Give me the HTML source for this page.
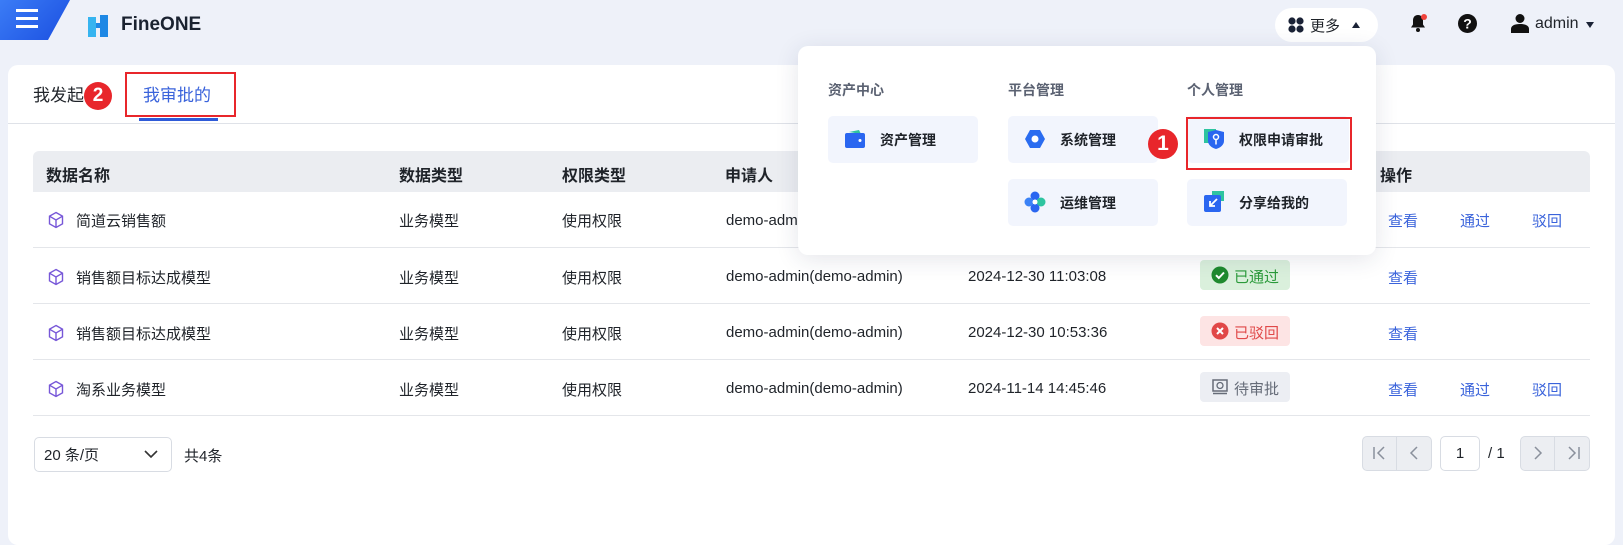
<!DOCTYPE html>
<html><head><meta charset="utf-8"><style>
*{box-sizing:border-box;margin:0;padding:0}
body{width:1623px;height:534px;overflow:hidden;background:#eef1f9;font-family:"Liberation Sans","Noto Sans CJK SC",sans-serif;color:#1f2329;position:relative;font-size:15px}
.a{position:absolute}
.panel{left:8px;top:65px;width:1607px;height:480px;background:#fff;border-radius:10px}
.th{top:151px;left:33px;width:1557px;height:41px;background:#ebedf1;border-radius:6px 6px 0 0}
.hl{font-weight:bold;font-size:16px;top:162px}
.line{height:1px;background:#e4e6ea;left:33px;width:1557px}
.c{font-size:15px}
.lk{color:#3a63db;font-size:15px}
.cube{width:18px;height:18px}
.dd{left:798px;top:46px;width:578px;height:209px;background:#fff;border-radius:10px;box-shadow:0 4px 24px rgba(30,40,80,.12)}
.card{background:#f2f5fd;border-radius:5px;height:47px;width:150px;font-weight:bold;font-size:14px}
.card span{position:absolute;left:52px;top:14px}
.ic{position:absolute;left:16px;top:12px;width:22px;height:22px}
.gh{font-size:14px;color:#5b6272;font-weight:bold;top:80px}
.badge{position:absolute;border-radius:12px;width:30px;height:30px;background:#e8262b;color:#fff;font-weight:bold;font-size:21px;text-align:center;line-height:30px}
.st{left:1200px;width:90px;height:30px;border-radius:4px;font-size:15px}
.st span{position:absolute;left:34px;top:6px}
.pg{border:1px solid #d8dce3;background:#eceef2;border-radius:5px;height:35px;top:436px}
</style></head><body>
<div class="a" style="left:0;top:0;width:72px;height:40px;background:linear-gradient(135deg,#3b7cf6,#1a4ee0);clip-path:polygon(0 0,70px 0,48px 40px,0 40px);border-bottom-right-radius:14px"></div>
<div class="a" style="left:16px;top:9px;width:22px;height:3px;background:#fff;box-shadow:0 8px 0 #fff,0 16px 0 #fff"></div>
<svg class="a" style="left:87px;top:14px" width="22" height="24" viewBox="0 0 22 24"><path d="M1 3h8v6h4v-8h8v22h-8v-9h-4v9h-8z" fill="#1e88e5"/><path d="M1 3h8v20h-8z" fill="#36b4f0"/></svg>
<div class="a" style="left:121px;top:14px;font-weight:bold;font-size:19px;color:#1a2230">FineONE</div>
<div class="a" style="left:1275px;top:8px;width:103px;height:34px;background:#fff;border-radius:17px"></div>
<svg class="a" style="left:1288px;top:17px" width="16" height="16"><circle cx="4" cy="4" r="3.6" fill="#1a2236"/><circle cx="12" cy="4" r="3.6" fill="#1a2236"/><circle cx="4" cy="12" r="3.6" fill="#1a2236"/><circle cx="12" cy="12" r="3.6" fill="#1a2236"/></svg>
<div class="a" style="left:1310px;top:15px;font-size:15px">更多</div>
<div class="a" style="left:1352px;top:22px;width:0;height:0;border-left:4px solid transparent;border-right:4px solid transparent;border-bottom:6px solid #1a2236"></div>
<svg class="a" style="left:1408px;top:13px" width="20" height="20" viewBox="0 0 20 20"><path d="M10 2c-3.5 0-5 2.5-5 5.5v4l-2 3h14l-2-3v-4C15 4.5 13.5 2 10 2z" fill="#111"/><circle cx="10" cy="17" r="2" fill="#111"/><circle cx="16" cy="4" r="3" fill="#f0433c"/></svg>
<svg class="a" style="left:1458px;top:14px" width="19" height="19"><circle cx="9.5" cy="9.5" r="9.5" fill="#111"/><text x="9.5" y="14.5" fill="#fff" font-size="14" font-weight="bold" text-anchor="middle" font-family="Liberation Sans">?</text></svg>
<svg class="a" style="left:1511px;top:13px" width="18" height="20"><circle cx="9" cy="5.5" r="4.5" fill="#111"/><path d="M0 20v-4c0-3 3-5 9-5s9 2 9 5v4z" fill="#111"/></svg>
<div class="a" style="left:1535px;top:15px;font-size:16px">admin</div>
<div class="a" style="left:1586px;top:22px;border-left:4px solid transparent;border-right:4px solid transparent;border-top:6px solid #1a2236"></div>

<div class="a panel"></div>
<div class="a" style="left:33px;top:81px;font-size:17px">我发起</div>
<div class="a" style="left:143px;top:81px;font-size:17px;color:#3a63db">我审批的</div>
<div class="a" style="left:139px;top:118px;width:79px;height:3px;background:#2e5bd8"></div>
<div class="a" style="left:8px;top:123px;width:1607px;height:1px;background:#dfe2e8"></div>
<div class="a" style="left:125px;top:72px;width:111px;height:45px;border:2px solid #e8262b"></div>
<div class="badge a" style="left:84px;top:82px;width:28px;height:28px;line-height:28px;border-radius:14px;font-size:19px">2</div>

<div class="a th"></div>
<div class="a hl" style="left:46px">数据名称</div>
<div class="a hl" style="left:399px">数据类型</div>
<div class="a hl" style="left:562px">权限类型</div>
<div class="a hl" style="left:725px">申请人</div>
<div class="a hl" style="left:1380px">操作</div>

<div class="a line" style="top:247px"></div>
<div class="a line" style="top:303px"></div>
<div class="a line" style="top:359px"></div>
<div class="a line" style="top:415px"></div>

<div class="a" style="left:0;top:210px;width:100%">
<svg class="a cube" style="left:47px;top:1px" viewBox="0 0 18 18"><path d="M9 1.5l6.5 3.7v7.6L9 16.5 2.5 12.8V5.2z M2.5 5.2L9 9l6.5-3.8 M9 9v7.5" fill="none" stroke="#7757d8" stroke-width="1.4"/></svg>
<div class="a c" style="left:76px">简道云销售额</div><div class="a c" style="left:399px">业务模型</div><div class="a c" style="left:562px">使用权限</div><div class="a c" style="left:726px;top:2px">demo-admin</div>
<div class="a lk" style="left:1388px">查看</div><div class="a lk" style="left:1460px">通过</div><div class="a lk" style="left:1532px">驳回</div></div>

<div class="a" style="left:0;top:267px;width:100%">
<svg class="a cube" style="left:47px;top:1px" viewBox="0 0 18 18"><path d="M9 1.5l6.5 3.7v7.6L9 16.5 2.5 12.8V5.2z M2.5 5.2L9 9l6.5-3.8 M9 9v7.5" fill="none" stroke="#7757d8" stroke-width="1.4"/></svg>
<div class="a c" style="left:76px">销售额目标达成模型</div><div class="a c" style="left:399px">业务模型</div><div class="a c" style="left:562px">使用权限</div><div class="a c" style="left:726px;top:1px">demo-admin(demo-admin)</div><div class="a c" style="left:968px;top:1px">2024-12-30 11:03:08</div>
<div class="a lk" style="left:1388px">查看</div></div>

<div class="a" style="left:0;top:323px;width:100%">
<svg class="a cube" style="left:47px;top:1px" viewBox="0 0 18 18"><path d="M9 1.5l6.5 3.7v7.6L9 16.5 2.5 12.8V5.2z M2.5 5.2L9 9l6.5-3.8 M9 9v7.5" fill="none" stroke="#7757d8" stroke-width="1.4"/></svg>
<div class="a c" style="left:76px">销售额目标达成模型</div><div class="a c" style="left:399px">业务模型</div><div class="a c" style="left:562px">使用权限</div><div class="a c" style="left:726px;top:1px">demo-admin(demo-admin)</div><div class="a c" style="left:968px;top:1px">2024-12-30 10:53:36</div>
<div class="a lk" style="left:1388px">查看</div></div>

<div class="a" style="left:0;top:379px;width:100%">
<svg class="a cube" style="left:47px;top:1px" viewBox="0 0 18 18"><path d="M9 1.5l6.5 3.7v7.6L9 16.5 2.5 12.8V5.2z M2.5 5.2L9 9l6.5-3.8 M9 9v7.5" fill="none" stroke="#7757d8" stroke-width="1.4"/></svg>
<div class="a c" style="left:76px">淘系业务模型</div><div class="a c" style="left:399px">业务模型</div><div class="a c" style="left:562px">使用权限</div><div class="a c" style="left:726px;top:1px">demo-admin(demo-admin)</div><div class="a c" style="left:968px;top:1px">2024-11-14 14:45:46</div>
<div class="a lk" style="left:1388px">查看</div><div class="a lk" style="left:1460px">通过</div><div class="a lk" style="left:1532px">驳回</div></div>

<div class="a st" style="top:260px;background:#daf0dc;color:#2a9a3a"><svg class="a" style="left:11px;top:6px" width="18" height="18"><circle cx="9" cy="9" r="8.5" fill="#1f8a2e"/><path d="M5 9.2l2.8 2.8L13 6.5" fill="none" stroke="#fff" stroke-width="2"/></svg><span>已通过</span></div>
<div class="a st" style="top:316px;background:#fde4e4;color:#e04848"><svg class="a" style="left:11px;top:6px" width="18" height="18"><circle cx="9" cy="9" r="8.5" fill="#e14848"/><path d="M6 6l6 6M12 6l-6 6" stroke="#fff" stroke-width="2"/></svg><span>已驳回</span></div>
<div class="a st" style="top:372px;background:#eceef3;color:#666c78"><svg class="a" style="left:12px;top:7px" width="16" height="16"><rect x="1" y="1" width="14" height="11" fill="none" stroke="#666c78" stroke-width="1.5"/><path d="M1 14.5h14" stroke="#666c78" stroke-width="1.5"/><circle cx="8" cy="6.5" r="3" fill="none" stroke="#666c78" stroke-width="1.3"/></svg><span>待审批</span></div>

<div class="a" style="left:34px;top:437px;width:138px;height:35px;border:1px solid #d8dce3;border-radius:5px"></div>
<div class="a c" style="left:44px;top:444px">20 条/页</div>
<svg class="a" style="left:144px;top:449px" width="14" height="10"><path d="M1 2l6 6 6-6" fill="none" stroke="#333" stroke-width="1.6"/></svg>
<div class="a c" style="left:184px;top:445px">共4条</div>
<div class="a pg" style="left:1362px;width:70px"></div><div class="a" style="left:1396px;top:437px;width:1px;height:33px;background:#d8dce3"></div>
<div class="a pg" style="left:1520px;width:70px"></div><div class="a" style="left:1554px;top:437px;width:1px;height:33px;background:#d8dce3"></div>
<svg class="a" style="left:1372px;top:446px" width="16" height="14"><path d="M2 1v12M12 1L6 7l6 6" fill="none" stroke="#8a909c" stroke-width="1.5"/></svg>
<svg class="a" style="left:1408px;top:446px" width="12" height="14"><path d="M9 1L3 7l6 6" fill="none" stroke="#8a909c" stroke-width="1.5"/></svg>
<svg class="a" style="left:1532px;top:446px" width="12" height="14"><path d="M3 1l6 6-6 6" fill="none" stroke="#8a909c" stroke-width="1.5"/></svg>
<svg class="a" style="left:1565px;top:446px" width="16" height="14"><path d="M4 1l6 6-6 6M14 1v12" fill="none" stroke="#8a909c" stroke-width="1.5"/></svg>
<div class="a" style="left:1440px;top:436px;width:40px;height:35px;border:1px solid #d8dce3;border-radius:5px;background:#fff;text-align:center;line-height:33px">1</div>
<div class="a c" style="left:1488px;top:445px">/ 1</div>

<div class="a dd"></div>
<div class="a gh" style="left:828px">资产中心</div>
<div class="a gh" style="left:1008px">平台管理</div>
<div class="a gh" style="left:1187px">个人管理</div>
<div class="a card" style="left:828px;top:116px"><svg class="ic" viewBox="0 0 22 22"><path d="M5 4l10-2 2 4z" fill="#2ec4a0"/><rect x="1" y="5" width="20" height="15" rx="2" fill="#2a66f0"/><circle cx="16" cy="12.5" r="1.5" fill="#fff"/></svg><span>资产管理</span></div>
<div class="a card" style="left:1008px;top:116px"><svg class="ic" viewBox="0 0 22 22"><path d="M6 2h10l5 9-5 9H6l-5-9z" fill="#2a6cf0"/><circle cx="11" cy="11" r="3.5" fill="#fff"/></svg><span>系统管理</span></div>
<div class="a card" style="left:1187px;top:116px;width:162px"><svg class="ic" viewBox="0 0 22 22"><rect x="1" y="1" width="12" height="14" fill="#2ec4a0"/><path d="M5 4l8-2 8 2v9c0 4-4 7-8 8-4-1-8-4-8-8z" fill="#2a66f0"/><circle cx="13" cy="9" r="2.5" fill="none" stroke="#fff" stroke-width="1.5"/><path d="M13 11.5v5" stroke="#fff" stroke-width="1.5"/></svg><span>权限申请审批</span></div>
<div class="a card" style="left:1008px;top:179px"><svg class="ic" viewBox="0 0 22 22"><circle cx="11" cy="5" r="4.5" fill="#2a66f0"/><circle cx="17" cy="11" r="4.5" fill="#2ec4a0"/><circle cx="11" cy="17" r="4.5" fill="#2a66f0"/><circle cx="5" cy="11" r="4.5" fill="#3b82f6"/><circle cx="11" cy="11" r="2.5" fill="#fff"/></svg><span>运维管理</span></div>
<div class="a card" style="left:1187px;top:179px;width:160px"><svg class="ic" viewBox="0 0 22 22"><rect x="9" y="0" width="12" height="10" fill="#2ec4a0"/><rect x="1" y="4" width="17" height="17" rx="2" fill="#2a66f0"/><path d="M14 8l-7 7M7 10v5h5" fill="none" stroke="#fff" stroke-width="1.8"/></svg><span>分享给我的</span></div>
<div class="a" style="left:1186px;top:117px;width:166px;height:53px;border:2px solid #e8262b"></div>
<div class="badge a" style="left:1148px;top:129px;width:30px;border-radius:15px">1</div>
</body></html>
